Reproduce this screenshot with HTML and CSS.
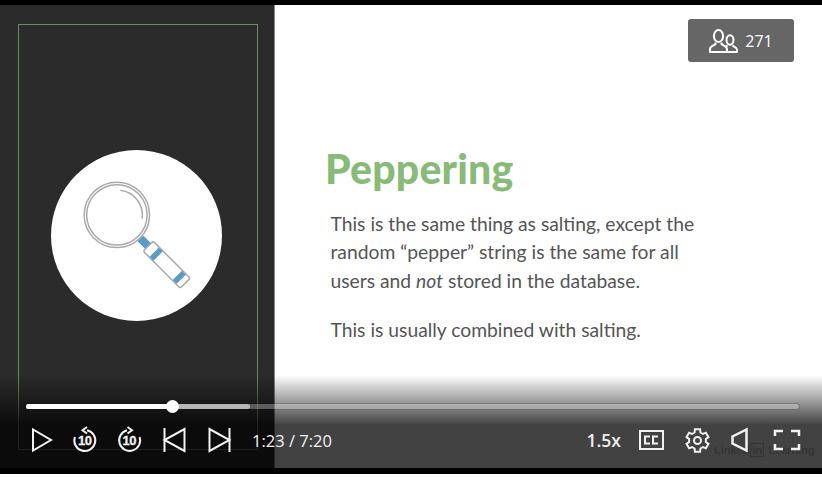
FILE: index.html
```html
<!DOCTYPE html>
<html lang="en">
<head>
  <meta charset="UTF-8" />
  <title>Peppering</title>
  <link rel="stylesheet" href="styles.css">
</head>
<body>
  <div class="player">
    <div class="slide">
      <div class="panel">
        <div class="frame">
          <div class="circle">
            <svg class="lens" viewBox="0 0 170 170">
              <circle cx="65.5" cy="64.5" r="32.5" fill="none" stroke="#aaa" stroke-width="1.5"/>
              <circle cx="65.5" cy="64.5" r="30" fill="none" stroke="#aaa" stroke-width="1.5"/>
              <path d="M69 40A25 25 0 0 1 90.6 68.3" fill="none" stroke="#aaa" stroke-width="1.5"/>
              <g transform="rotate(45 65.5 64.5)">
                <rect x="98.5" y="60.5" width="11" height="8" fill="#5b9bc9"/>
                <rect x="109.5" y="57.5" width="52" height="14" rx="2" fill="#fff" stroke="#aaa" stroke-width="1.5"/>
                <rect x="118" y="58" width="5.5" height="13" fill="#5b9bc9"/>
                <rect x="150.5" y="58" width="5.5" height="13" fill="#5b9bc9"/>
              </g>
            </svg>
          </div>
        </div>
      </div>
      <div class="content">
        <h1 class="title">Peppering</h1>
        <p class="copy">This is the same thing as salting, except the<br>random “pepper” string is the same for all<br>users and <em>not</em> stored in the database.</p>
        <p class="copy">This is usually combined with salting.</p>
      </div>
    </div>

    <div class="viewers">
      <svg class="people" viewBox="0 0 29 24">
        <ellipse cx="9.500" cy="7" rx="4.600" ry="6"/>
        <path d="M6.500 13.500v1.500c-1.500 1.500-5.500 2-5.500 5V23H18v-3c0-3-4-3.500-5.500-5v-1.500"/>
        <ellipse cx="21" cy="11" rx="3.500" ry="4.700"/>
        <path d="M18 23H28v-2.500c0-2-3-2.500-4.500-4M18.500 16.500l-1.500 .8"/>
      </svg>
      <span>271</span>
    </div>

    <div class="overlay">
      <div class="watermark">Linked<b>in</b> Learning</div>
      <div class="track">
        <div class="buffered"></div>
        <div class="played"></div>
        <div class="thumb"></div>
      </div>
      <div class="controls">
        <div class="group">
          <svg class="icon play" viewBox="0 0 22 24"><path d="M2 1.500V22.500L20 12z"/></svg>
          <svg class="icon skip" viewBox="0 0 23 26">
            <path d="M13 3.200A10.500 10.500 0 1 1 .9 10"/>
            <path d="M13 0 8.500 3.200 13 6.500"/>
            <text x="10.800" y="18" class="ten">10</text>
          </svg>
          <svg class="icon skip" viewBox="0 0 23 26">
            <path d="M9 3.200A10.500 10.500 0 1 0 21.600 10"/>
            <path d="M9.500 0 14 3.200 9.500 6.500"/>
            <text x="11.200" y="18" class="ten">10</text>
          </svg>
          <svg class="icon" viewBox="0 0 24 26"><path d="M2.500 1V25M22.500 2V24L2.500 13z"/></svg>
          <svg class="icon" viewBox="0 0 24 26"><path d="M22.500 1V25M2.500 2V24L22.500 13z"/></svg>
          <span class="time">1:23 / 7:20</span>
        </div>
        <div class="group">
          <span class="speed">1.5x</span>
          <svg class="icon cc" viewBox="0 0 25 20">
            <rect x="1" y="1" width="23" height="18"/>
            <path d="M11 6.500H6V13.500H11M19 6.500H14V13.500H19"/>
          </svg>
          <svg class="icon gear" viewBox="-12.500 -12.500 25 25">
            <path d="M-2.910-7.990-2.590-11.200 2.590-11.200 2.910-7.990 5.460-6.510 8.410-7.840 11-3.360 8.370-1.480 8.370 1.480 11 3.360 8.410 7.840 5.460 6.510 2.910 7.990 2.590 11.200-2.590 11.200-2.910 7.990-5.460 6.510-8.410 7.840-11 3.360-8.370 1.480-8.370-1.480-11-3.360-8.410-7.840-5.460-6.510z"/>
            <circle r="3.500"/>
          </svg>
          <svg class="icon volume" viewBox="0 0 22 24"><path d="M15.500 1.500 1.500 8.500V15.500L15.500 22.500z"/></svg>
          <svg class="icon fullscreen" viewBox="0 0 26 20"><path d="M1 6V1H9M17 1H25V6M25 14V19H17M9 19H1V14"/></svg>
        </div>
      </div>
    </div>
  </div>
  <div class="footer-bar"></div>
</body>
</html>
```

FILE: styles.css
```css
html, body {
  margin: 0;
  height: 477px;
  overflow: hidden;
  background: #fff;
}
body {
  font-family: "Open Sans", sans-serif;
  border-top: 5px solid #000;
  box-sizing: border-box;
}
.player {
  position: relative;
  height: 463px;
}
.footer-bar {
  height: 6px;
  background: #000;
}
.slide {
  display: flex;
  height: 100%;
}
.panel {
  width: 275px;
  flex: none;
  box-sizing: border-box;
  padding: 19px 16px 18px 18px;
  background: #2b2b2b;
  border-right: 1px solid #8a8a8a;
}
.frame {
  height: 100%;
  box-sizing: border-box;
  border: 1px solid #6f8a68;
  display: flex;
  align-items: center;
  justify-content: center;
}
.circle {
  width: 171px;
  height: 171px;
  margin: 0 3px 4px 0;
  border-radius: 50%;
  background: #fff;
}
.lens {
  display: block;
  width: 171px;
  height: 171px;
}
.content {
  flex: 1;
  padding: 136px 0 0 50px;
  background: #fff;
  font-family: Lato, sans-serif;
}
.title {
  margin: 0 0 13px;
  font-size: 41px;
  line-height: 56px;
  font-weight: 900;
  letter-spacing: .2px;
  color: #88bb78;
}
.copy {
  margin: 0 0 21px 5.500px;
  font-size: 19.300px;
  line-height: 28.300px;
  color: #555;
}
.viewers {
  position: absolute;
  top: 14px;
  left: 688px;
  width: 106px;
  height: 43px;
  display: flex;
  align-items: center;
  justify-content: center;
  gap: 7px;
  background: #666;
  border-radius: 3px;
  color: #fff;
  font-size: 16px;
}
.people {
  width: 29px;
  height: 24px;
  fill: none;
  stroke: #fff;
  stroke-width: 2;
  stroke-linejoin: round;
}
.overlay {
  position: absolute;
  left: 0;
  right: 0;
  bottom: 0;
  height: 93px;
  background: linear-gradient(to bottom, rgba(0,0,0,0), rgba(0,0,0,.74) 50px);
}
.track {
  position: absolute;
  left: 26px;
  top: 29px;
  width: 773px;
  height: 5px;
  border-radius: 3px;
  background: rgba(255,255,255,.3);
  box-shadow: 0 0 0 1px rgba(0,0,0,.15);
}
.buffered {
  position: absolute;
  left: 0;
  top: 0;
  height: 100%;
  width: 224px;
  border-radius: 3px;
  background: rgba(255,255,255,.55);
}
.played {
  position: absolute;
  left: 0;
  top: 0;
  height: 100%;
  width: 146px;
  border-radius: 3px;
  background: #fff;
}
.thumb {
  position: absolute;
  left: 140px;
  top: -4px;
  width: 13px;
  height: 13px;
  border-radius: 50%;
  background: #fff;
}
.controls {
  position: absolute;
  left: 31px;
  right: 22px;
  top: 52px;
  display: flex;
  justify-content: space-between;
  align-items: center;
  height: 26px;
  color: #fff;
}
.group {
  display: flex;
  align-items: center;
  gap: 21px;
}
.icon {
  display: block;
  width: 24px;
  height: 26px;
  fill: none;
  stroke: #f2f2f2;
  stroke-width: 2;
  overflow: visible;
}
.play {
  width: 22px;
  height: 24px;
}
.skip {
  width: 23px;
  height: 26px;
}
.ten {
  fill: #f2f2f2;
  stroke: #f2f2f2;
  stroke-width: .3;
  font-family: "Liberation Sans", sans-serif;
  font-size: 13px;
  font-weight: 700;
  letter-spacing: -.5px;
  text-anchor: middle;
}
.time {
  font-size: 16.500px;
  color: #f2f2f2;
}
.speed {
  margin-right: -3px;
  font-size: 17.500px;
  font-weight: 600;
  color: #eee;
}
.cc {
  width: 25px;
  height: 20px;
}
.gear {
  width: 25px;
  height: 25px;
}
.volume {
  width: 22px;
  height: 24px;
  stroke-width: 2.500;
}
.fullscreen {
  width: 26px;
  height: 20px;
  stroke-width: 2.500;
}
.watermark {
  position: absolute;
  left: 714px;
  top: 69px;
  white-space: nowrap;
  font-family: "Liberation Sans", sans-serif;
  font-size: 11px;
  font-weight: 700;
  color: #353535;
}
.watermark b {
  margin: 0 1px;
  padding: 0 1px;
  border: 1px solid #353535;
}
```
